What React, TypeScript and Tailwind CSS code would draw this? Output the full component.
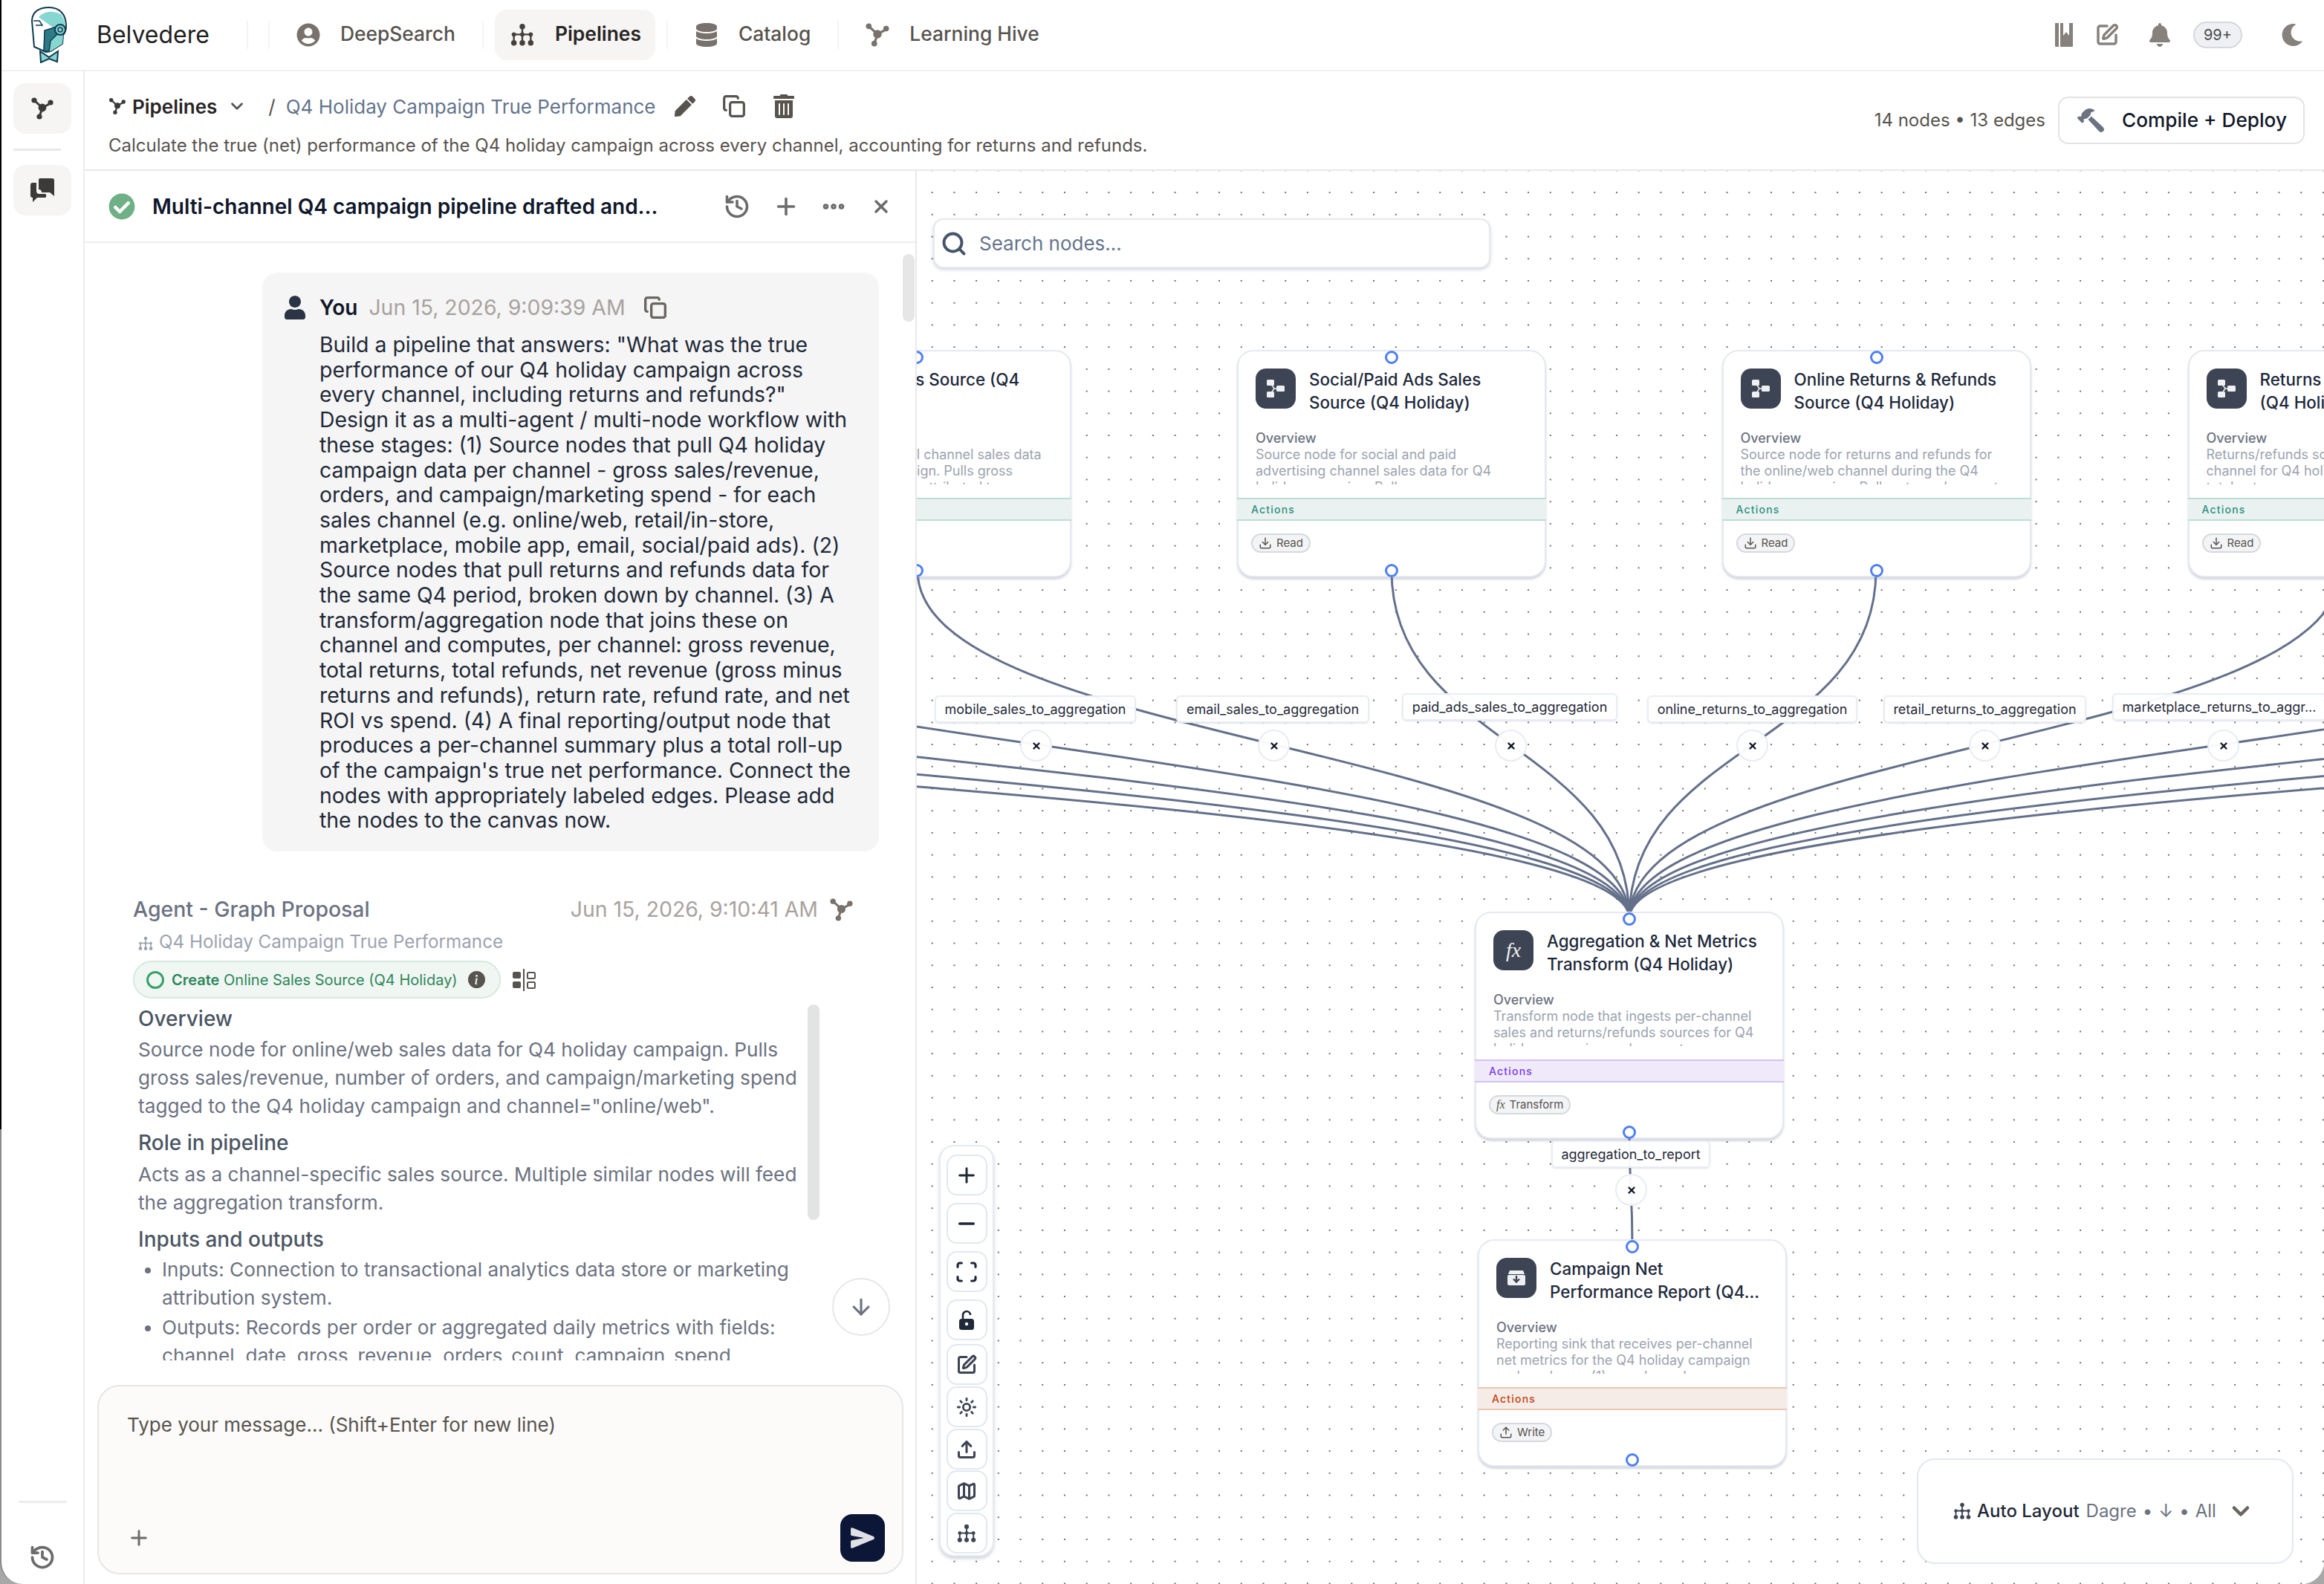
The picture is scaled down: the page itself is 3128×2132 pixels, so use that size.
import { ArrowDown, ChevronDown, Copy, Download, Ellipsis, History, Map as MapIcon, Minus, Plus, Scan, Search, SquarePen, Sun, Upload, X } from 'lucide-react';
import { BsInfoCircleFill } from 'react-icons/bs';
import { FaBell, FaCheckCircle, FaDatabase, FaHammer, FaMoon, FaPen, FaTrashAlt, FaUser, FaUserCircle } from 'react-icons/fa';
import { IoSend } from 'react-icons/io5';

// canvas origin in page coordinates
const OX = 1234;
const OY = 230;

function GraphIcon({ className }: { className?: string }) {
  return (
    <svg viewBox="0 0 32 32" className={className} fill="currentColor" stroke="currentColor">
      <path d="M5 5 L16 15 L27 9 M16 15 L12 27" strokeWidth="3" fill="none" />
      <circle cx="5" cy="5" r="3.6" stroke="none" />
      <circle cx="27" cy="8" r="3.6" stroke="none" />
      <circle cx="12" cy="27" r="3.6" stroke="none" />
      <circle cx="16" cy="15" r="5.4" stroke="none" />
    </svg>
  );
}

function TreeIcon({ className }: { className?: string }) {
  return (
    <svg viewBox="0 0 24 24" className={className} fill="currentColor" stroke="currentColor">
      <path d="M12 4 V20 M3.5 11.5 H20.5 M3.5 11.5 V20 M20.5 11.5 V20" strokeWidth="1.8" fill="none" />
      <circle cx="12" cy="3.6" r="2.8" stroke="none" />
      <circle cx="3.5" cy="11.5" r="2.2" stroke="none" />
      <circle cx="12" cy="11.5" r="2.2" stroke="none" />
      <circle cx="20.5" cy="11.5" r="2.2" stroke="none" />
      <circle cx="3.5" cy="20" r="2.8" stroke="none" />
      <circle cx="12" cy="20" r="2.8" stroke="none" />
      <circle cx="20.5" cy="20" r="2.8" stroke="none" />
    </svg>
  );
}

function ChatIcon({ className }: { className?: string }) {
  return (
    <svg viewBox="0 0 32 32" className={className} fill="currentColor">
      <path d="M11 2 a2 2 0 0 1 2 -2 H29 a3 3 0 0 1 3 3 V24 L26 19 H15 a4 4 0 0 0 -4 -4 Z" />
      <path d="M0 9 a3 3 0 0 1 3 -3 H8 V17 a4 4 0 0 0 4 4 H20 a3 3 0 0 1 0 5 H9 L3 32 V26 a3 3 0 0 1 -3 -3 Z" />
    </svg>
  );
}

function BookmarksIcon({ className }: { className?: string }) {
  return (
    <svg viewBox="0 0 24 32" className={className} fill="currentColor">
      <path d="M1 0 H5 V32 H1 a1 1 0 0 1 -1 -1 V1 a1 1 0 0 1 1 -1 Z" />
      <path d="M7 0 H11 V17 L15 12 L19 17 V0 H24 V31 a1 1 0 0 1 -1 1 H7 Z" />
    </svg>
  );
}

function SplitIcon({ className }: { className?: string }) {
  return (
    <svg viewBox="0 0 32 30" className={className} fill="none" stroke="currentColor">
      <rect x="0" y="4" width="11" height="9" rx="2" fill="currentColor" stroke="none" />
      <rect x="0" y="17" width="11" height="9" rx="2" fill="currentColor" stroke="none" />
      <path d="M15 0 V30" strokeWidth="2" />
      <rect x="20" y="5" width="10" height="8" rx="1.5" strokeWidth="2" />
      <rect x="20" y="18" width="10" height="8" rx="1.5" strokeWidth="2" />
    </svg>
  );
}

function OpenLockIcon({ className }: { className?: string }) {
  return (
    <svg viewBox="0 0 24 28" className={className}>
      <path d="M7 13 V7 a5 5 0 0 1 10 0" fill="none" stroke="currentColor" strokeWidth="2.6" />
      <rect x="2" y="12" width="20" height="15" rx="3.5" fill="currentColor" />
      <circle cx="12" cy="19" r="2.2" fill="#fff" />
    </svg>
  );
}

function SourceIcon() {
  return (
    <svg viewBox="0 0 24 24" className="w-6 h-6" fill="#eef0f3" stroke="#eef0f3">
      <rect x="0" y="0" width="10" height="8" rx="1.5" stroke="none" />
      <rect x="0" y="16" width="10" height="8" rx="1.5" stroke="none" />
      <rect x="13" y="8" width="11" height="8" rx="1.5" stroke="none" />
      <path d="M6 6 L10 12 L6 18 M10 12 H14" strokeWidth="1.5" fill="none" />
    </svg>
  );
}

function SinkIcon() {
  return (
    <svg viewBox="0 0 24 24" className="w-6 h-6">
      <path d="M3 2 H21 L23 7 H1 Z" fill="#eef0f3" />
      <rect x="0" y="8" width="24" height="14" rx="2" fill="#eef0f3" />
      <path d="M12 9 V17 M8 13.5 L12 17.5 L16 13.5" stroke="#3d4453" strokeWidth="2.4" fill="none" />
    </svg>
  );
}

function Logo() {
  return (
    <svg viewBox="0 0 48 76" className="w-12 h-[76px]">
      <path d="M20 61 L4 54 L1 19 C1 6 12 1 24 1 C38 1 47 10 47 26 C47 32 45 36 43 38 L42 50 L26 60 Z" fill="#fff" stroke="#103a4f" strokeWidth="2" />
      <path d="M10 14 C18 5 30 5 40 10 C46 18 47 28 44 36 L30 30 L18 32 L16 58 L20 60 L26 60 L42 50 L43 38" fill="#86d6d2" stroke="none" />
      <path d="M17 60 L18 32 L34 27 L34 38 L26 46 L24 60 Z" fill="#2e7a85" stroke="#103a4f" strokeWidth="1.5" />
      <circle cx="39" cy="31" r="7" fill="#86d6d2" stroke="#103a4f" strokeWidth="2" />
      <circle cx="39" cy="31" r="3" fill="none" stroke="#103a4f" strokeWidth="1.5" />
      <path d="M3 19 H11 L15 25 L6 25" fill="none" stroke="#103a4f" strokeWidth="1.5" />
      <path d="M12 60 L24 68 L36 60 L35 74 L24 70 L13 75 Z" fill="#86d6d2" stroke="#103a4f" strokeWidth="2" />
    </svg>
  );
}

function Sep({ className }: { className: string }) {
  return <div className={`w-[2px] h-[38px] bg-[#f4f4f4] ${className}`} />;
}

const sourceBand = { band: 'bg-[#e9f2f0] border-[#bcdcd5]', text: 'text-[#2f8f7f]' };
const transformBand = { band: 'bg-[#efe9fa] border-[#d3c0f6]', text: 'text-[#7c3aed]' };
const sinkBand = { band: 'bg-[#f6ece7] border-[#efc4b0]', text: 'text-[#c2410c]' };

const nodes = [
  { x: 1026, y: 471, title: ['Email Sales Source (Q4', 'Holiday)'], desc: ['Source node for email channel sales data', 'for Q4 holiday campaign. Pulls gross', 'sales/revenue, orders attributed to'], icon: <SourceIcon />, color: sourceBand, chip: 'Read' },
  { x: 1665, y: 471, title: ['Social/Paid Ads Sales', 'Source (Q4 Holiday)'], desc: ['Source node for social and paid', 'advertising channel sales data for Q4', 'holiday campaign. Pulls gross'], icon: <SourceIcon />, color: sourceBand, chip: 'Read' },
  { x: 2317.5, y: 471, title: ['Online Returns & Refunds', 'Source (Q4 Holiday)'], desc: ['Source node for returns and refunds for', 'the online/web channel during the Q4', 'holiday campaign. Pulls returned amounts'], icon: <SourceIcon />, color: sourceBand, chip: 'Read' },
  { x: 2944.5, y: 471, title: ['Returns & Refunds Source', '(Q4 Holiday)'], desc: ['Returns/refunds source for retail', 'channel for Q4 holiday campaign. Pulls', 'total_returns, amounts and counts'], icon: <SourceIcon />, color: sourceBand, chip: 'Read' },
  { x: 1985, y: 1227, title: ['Aggregation & Net Metrics', 'Transform (Q4 Holiday)'], desc: ['Transform node that ingests per-channel', 'sales and returns/refunds sources for Q4', 'holiday campaign and computes per'], icon: <span className="font-['Liberation_Serif',serif] italic text-[28px] text-[#eef0f3]">fx</span>, color: transformBand, chip: 'Transform' },
  { x: 1989, y: 1668, title: ['Campaign Net', 'Performance Report (Q4...'], desc: ['Reporting sink that receives per-channel', 'net metrics for the Q4 holiday campaign', 'and produces: (1) per-channel summary'], icon: <SinkIcon />, color: sinkBand, chip: 'Write' },
];

const edgeStarts = [-1323, -683, -43, 597, 1235, 1873, 2525, 3149, 3790, 4430, 5070, 5710];

const edgeLabels = [
  { name: 'mobile_sales_to_aggregation', x: 1258, y: 936, w: 271, bx: 1394, by: 1003 },
  { name: 'email_sales_to_aggregation', x: 1583, y: 936, w: 260, bx: 1714, by: 1003 },
  { name: 'paid_ads_sales_to_aggregation', x: 1887, y: 933, w: 290, bx: 2033, by: 1003 },
  { name: 'online_returns_to_aggregation', x: 2217, y: 936, w: 283, bx: 2358, by: 1003 },
  { name: 'retail_returns_to_aggregation', x: 2535, y: 936, w: 273, bx: 2671, by: 1003 },
  { name: 'marketplace_returns_to_aggr...', x: 2843, y: 933, w: 288, bx: 2992, by: 1003 },
  { name: 'aggregation_to_report', x: 2088, y: 1535, w: 214, bx: 2195, by: 1601 },
];

const zoomButtons = [
  { icon: <Plus className="w-8 h-8" strokeWidth={2.2} />, cls: '' },
  { icon: <Minus className="w-8 h-8" strokeWidth={2.6} />, cls: 'mt-[10px]' },
  { icon: <Scan className="w-8 h-8" strokeWidth={2.4} />, cls: 'mt-[10px]' },
  { icon: <OpenLockIcon className="w-[24px] h-[28px]" />, cls: 'mt-[10px]' },
  { icon: <SquarePen className="w-[28px] h-[28px] text-[#3d4453]" strokeWidth={2.6} />, cls: 'mt-[5px]' },
  { icon: <Sun className="w-[28px] h-[28px] text-[#3d4453]" strokeWidth={2.4} />, cls: 'mt-[2px]' },
  { icon: <Upload className="w-[28px] h-[28px] text-[#3d4453]" strokeWidth={2.6} />, cls: 'mt-[2px]' },
  { icon: <MapIcon className="w-[28px] h-[28px] text-[#3d4453]" strokeWidth={2.6} />, cls: 'mt-[1px]' },
  { icon: <TreeIcon className="w-[26px] h-[26px] text-[#3d4453]" />, cls: 'mt-[2px]' },
];

const userLines = `Build a pipeline that answers: "What was the true performance of our Q4 holiday campaign across every channel, including returns and refunds?" Design it as a multi-agent / multi-node workflow with these stages: (1) Source nodes that pull Q4 holiday campaign data per channel - gross sales/revenue, orders, and campaign/marketing spend - for each sales channel (e.g. online/web, retail/in-store, marketplace, mobile app, email, social/paid ads). (2) Source nodes that pull returns and refunds data for the same Q4 period, broken down by channel. (3) A transform/aggregation node that joins these on channel and computes, per channel: gross revenue, total returns, total refunds, net revenue (gross minus returns and refunds), return rate, refund rate, and net ROI vs spend. (4) A final reporting/output node that produces a per-channel summary plus a total roll-up of the campaign's true net performance. Connect the nodes with appropriately labeled edges. Please add the nodes to the canvas now.`;

function FlowNode({ n }: { n: (typeof nodes)[number] }) {
  return (
    <div
      className="absolute w-[416px] h-[306px] bg-white rounded-[22px] border-2 border-[#e4e8f0] shadow-[0_3px_3px_rgba(100,116,139,0.28)] flex flex-col"
      style={{ left: n.x - OX, top: n.y - OY }}
    >
      <div className="absolute top-[-1px] left-1/2 -translate-x-1/2 w-[18px] h-[18px] rounded-full bg-white border-[3px] border-[#4f7ff5]" />
      <div className="absolute bottom-[-2px] left-1/2 -translate-x-1/2 w-[18px] h-[18px] rounded-full bg-white border-[3px] border-[#4f7ff5]" />
      <div className="flex gap-[18px] pt-[23px] px-[23px]">
        <div className="w-[54px] h-[54px] shrink-0 rounded-[14px] bg-[#3d4453] flex items-center justify-center">{n.icon}</div>
        <div className="text-[22.4px] leading-[30.5px] font-medium text-[#1e293b] whitespace-nowrap">
          {n.title.map((t) => (
            <div key={t}>{t}</div>
          ))}
        </div>
      </div>
      <div className="mt-[22px] mx-[23px] h-[73px] overflow-hidden text-[18px] leading-[22px] whitespace-nowrap">
        <div className="font-medium text-[#6b7280]">Overview</div>
        {n.desc.map((d) => (
          <div key={d} className="text-[#9ca3af]">{d}</div>
        ))}
      </div>
      <div className={`mt-[18px] h-[31px] -mx-[2px] border-y-2 flex items-center px-[19px] ${n.color.band}`}>
        <span className={`text-[14px] font-medium tracking-[1.2px] ${n.color.text}`}>Actions</span>
      </div>
      <div className="mt-[17px] ml-[17px] self-start h-[26px] rounded-full border-2 border-[#d5d8de] bg-[#f3f4f6] flex items-center gap-[6px] px-[8px] text-[15px] text-[#57534e]">
        {n.chip === 'Read' && <Download className="w-[18px] h-[18px]" />}
        {n.chip === 'Write' && <Upload className="w-[18px] h-[18px]" />}
        {n.chip === 'Transform' && <span className="font-['Liberation_Serif',serif] italic text-[16px]">fx</span>}
        {n.chip}
      </div>
    </div>
  );
}

export default function App() {
  return (
    <div className="relative w-[3128px] h-[2132px] overflow-hidden bg-[#a8a8a8] font-[Inter,sans-serif]">
      <div className="absolute inset-0 rounded-b-[30px] overflow-hidden bg-white border-l-2 border-[#8a8a8a] flex flex-col">
        {/* TOP NAV */}
        <header className="h-[96px] shrink-0 border-b-2 border-[#f0f0f0] flex items-center pl-[40px]">
          <Logo />
          <span className="ml-[40px] text-[32px] text-[#1f1f1f]">Belvedere</span>
          <Sep className="ml-[50px]" />
          <Sep className="ml-[27px]" />
          <FaUserCircle className="ml-[36px] w-8 h-8 text-[#78716c]" />
          <span className="ml-[27px] pb-[2px] text-[26.4px] font-medium text-[#57534e]">DeepSearch</span>
          <Sep className="ml-[36px]" />
          <div className="ml-[15px] h-[68px] w-[216px] rounded-[16px] bg-[#f6f5f4] flex items-center pl-[21px] gap-[28px]">
            <TreeIcon className="w-8 h-8 text-[#44403c]" />
            <span className="pb-[2px] text-[26.4px] font-semibold text-[#292524]">Pipelines</span>
          </div>
          <Sep className="ml-[15px]" />
          <FaDatabase className="ml-[38px] w-[28px] h-8 text-[#78716c]" />
          <span className="ml-[29px] pb-[2px] text-[26.4px] font-medium text-[#57534e]">Catalog</span>
          <Sep className="ml-[36px]" />
          <GraphIcon className="ml-[35px] w-[34px] h-[34px] text-[#78716c]" />
          <span className="ml-[26px] pb-[2px] text-[26.4px] font-medium text-[#57534e]">Learning Hive</span>
          <div className="ml-auto flex items-center pr-[28px] text-[#86817c]">
            <BookmarksIcon className="w-6 h-8" />
            <SquarePen className="ml-[30px] w-8 h-8" strokeWidth={2.6} />
            <FaBell className="ml-[40px] w-[30px] h-[32px]" />
            <div className="ml-[30px] w-[66px] h-[36px] rounded-full bg-[#eef0f3] border-2 border-[#d5d8de] flex items-center justify-center text-[20px] text-[#4b4b4b]">99+</div>
            <FaMoon className="ml-[52px] w-[30px] h-[30px]" />
          </div>
        </header>

        <div className="flex flex-1 min-h-0">
          {/* LEFT RAIL */}
          <aside className="w-[112px] shrink-0 border-r-2 border-[#ececec] flex flex-col pl-[16px] pt-[16px] pb-[18px]">
            <div className="w-[78px] h-[68px] rounded-[16px] bg-[#f6f5f4] flex items-center justify-center">
              <GraphIcon className="w-8 h-8 text-[#3b3a39]" />
            </div>
            <div className="mt-[20px] w-[64px] h-[3px] bg-[#e8e8e8]" />
            <div className="mt-[19px] w-[78px] h-[68px] rounded-[16px] bg-[#f6f5f4] flex items-center justify-center">
              <ChatIcon className="w-8 h-8 text-[#3b3a39]" />
            </div>
            <div className="mt-auto w-[65px] ml-[7px] h-[3px] bg-[#ececec]" />
            <History className="mt-[55px] ml-[21px] w-9 h-9 text-[#6b6b6b]" strokeWidth={2.5} />
          </aside>

          <div className="flex-1 min-w-0 flex flex-col">
            {/* PIPELINE HEADER */}
            <div className="h-[134px] shrink-0 border-b-2 border-[#e8e8e8] flex items-center pl-[32px] pr-[26px]">
              <div className="flex flex-col gap-[21px] pt-[13px]">
                <div className="flex items-center h-[34px]">
                  <GraphIcon className="w-[24px] h-[24px] text-[#3b3a39]" />
                  <span className="ml-[8px] text-[26px] font-semibold text-[#292524]">Pipelines</span>
                  <ChevronDown className="ml-[14px] w-[26px] h-[26px] text-[#57534e]" strokeWidth={2.5} />
                  <span className="ml-[29px] text-[26px] text-[#57534e]">/</span>
                  <span className="ml-[14px] text-[26px] text-[#64748b]">Q4 Holiday Campaign True Performance</span>
                  <FaPen className="ml-[25px] w-[28px] h-[28px] text-[#57534e]" />
                  <Copy className="ml-[36px] w-8 h-8 text-[#57534e]" strokeWidth={2.4} />
                  <FaTrashAlt className="ml-[37px] w-[28px] h-8 text-[#57534e]" />
                </div>
                <p className="text-[24px] leading-[30px] text-[#57534e]">Calculate the true (net) performance of the Q4 holiday campaign across every channel, accounting for returns and refunds.</p>
              </div>
              <span className="ml-auto text-[24px] text-[#57534e]">14 nodes • 13 edges</span>
              <div className="ml-[17px] w-[332px] h-[64px] rounded-[14px] border-2 border-[#e3e3e3] flex items-center pl-[24px]">
                <FaHammer className="w-[36px] h-[36px] text-[#6b7280] -scale-x-100" />
                <span className="ml-[24px] text-[26.2px] font-medium text-[#111827]">Compile + Deploy</span>
              </div>
            </div>

            <div className="flex flex-1 min-h-0">
              {/* CHAT PANEL */}
              <section className="w-[1120px] shrink-0 border-r-2 border-[#e8e8e8] flex flex-col">
                <div className="h-[97px] shrink-0 border-b-2 border-[#eeeeee] flex items-center pl-[32px]">
                  <FaCheckCircle className="w-[36px] h-[36px] text-[#6fb086]" />
                  <span className="ml-[23px] w-[684px] text-[28px] font-semibold text-[#0f172a] whitespace-nowrap">Multi-channel Q4 campaign pipeline drafted and...</span>
                  <History className="ml-[85px] w-9 h-9 text-[#6b6b6b]" strokeWidth={2.4} />
                  <Plus className="ml-[30px] w-9 h-9 text-[#6b6b6b]" strokeWidth={2.4} />
                  <Ellipsis className="ml-[28px] w-9 h-9 text-[#6b6b6b]" strokeWidth={3} />
                  <X className="ml-[32px] w-7 h-7 text-[#6b6b6b]" strokeWidth={3} />
                </div>

                <div className="relative flex-1 min-h-0 overflow-hidden">
                  <div className="absolute right-[1px] top-[15px] w-[16px] h-[91px] rounded-full bg-[#e6e6e6]" />

                  {/* user message */}
                  <div className="ml-[239px] mt-[40px] w-[830px] h-[779px] rounded-[20px] bg-[#f5f5f5] pl-[28px] pr-[35px] pt-[30px]">
                    <div className="flex items-center h-[34px]">
                      <FaUser className="w-[32px] h-[32px] text-[#2b3445]" />
                      <span className="ml-[17px] text-[28px] font-semibold text-[#111827]">You</span>
                      <span className="ml-[15px] text-[28.4px] text-[#a8a29e] whitespace-nowrap">Jun 15, 2026, 9:09:39 AM</span>
                      <Copy className="ml-[24px] w-8 h-8 text-[#6b6560]" strokeWidth={2.5} />
                    </div>
                    <p className="ml-[49px] mt-[16px] text-[28.4px] leading-[33.7px] text-[#1f2937]">{userLines}</p>
                  </div>

                  {/* agent message */}
                  <div className="ml-[65px] mt-[60px] w-[970px] flex items-center h-[36px]">
                    <span className="text-[28.4px] font-medium text-[#6b7280]">Agent - Graph Proposal</span>
                    <span className="ml-auto text-[28.4px] text-[#a8a29e]">Jun 15, 2026, 9:10:41 AM</span>
                    <GraphIcon className="ml-[15px] w-[33px] h-[33px] text-[#78716c]" />
                  </div>
                  <div className="ml-[72px] mt-[10px] flex items-center h-[32px]">
                    <TreeIcon className="w-[20px] h-[20px] mt-[4px] text-[#9ca3af]" />
                    <span className="ml-[8px] text-[24.2px] text-[#9ca3af]">Q4 Holiday Campaign True Performance</span>
                  </div>
                  <div className="ml-[65px] mt-[9px] flex items-center">
                    <div className="w-[495px] h-[51px] rounded-full bg-[#f0f7f3] border-2 border-[#d5eade] flex items-center pl-[16px]">
                      <div className="w-[24px] h-[24px] rounded-full border-[3px] border-[#38a169]" />
                      <span className="ml-[10px] text-[20px] text-[#2f855a] whitespace-nowrap">
                        <span className="font-semibold">Create</span> Online Sales Source (Q4 Holiday)
                      </span>
                      <BsInfoCircleFill className="ml-[14px] w-[23px] h-[23px] text-[#57534e]" />
                    </div>
                    <SplitIcon className="ml-[16px] w-[32px] h-[30px] text-[#57534e]" />
                  </div>

                  <div className="relative ml-[72px] mt-[8px] w-[917px] h-[479px] overflow-hidden">
                    <div className="absolute right-0 top-0 w-[16px] h-[290px] rounded-full bg-[#e2e3e3]" />
                    <h4 className="mt-[2px] text-[28px] leading-[34px] font-medium text-[#4b5563]">Overview</h4>
                    <p className="mt-[6px] w-[900px] text-[26.2px] leading-[38px] text-[#6b7280]">
                      Source node for online/web sales data for Q4 holiday campaign. Pulls gross sales/revenue, number of orders, and campaign/marketing spend tagged to the Q4 holiday campaign and channel="online/web".
                    </p>
                    <h4 className="mt-[13px] text-[28px] leading-[34px] font-medium text-[#4b5563]">Role in pipeline</h4>
                    <p className="mt-[7px] w-[900px] text-[26.2px] leading-[38px] text-[#6b7280]">
                      Acts as a channel-specific sales source. Multiple similar nodes will feed the aggregation transform.
                    </p>
                    <h4 className="mt-[13px] text-[28px] leading-[34px] font-medium text-[#4b5563]">Inputs and outputs</h4>
                    <ul className="mt-[5px] w-[890px] list-disc pl-[32px] text-[26.2px] leading-[38px] text-[#6b7280]">
                      <li>Inputs: Connection to transactional analytics data store or marketing attribution system.</li>
                      <li className="mt-[2px]">Outputs: Records per order or aggregated daily metrics with fields: channel, date, gross_revenue, orders_count, campaign_spend,</li>
                    </ul>
                  </div>

                  <div className="absolute left-[1006px] top-[1393px] w-[78px] h-[78px] rounded-full bg-white border-2 border-[#e5e7eb] flex items-center justify-center">
                    <ArrowDown className="w-[34px] h-[34px] text-[#6b7280]" strokeWidth={2.2} />
                  </div>
                </div>

                {/* composer */}
                <div className="h-[268px] shrink-0 pl-[17px] pr-[16px] pb-[13px]">
                  <div className="h-full rounded-[30px] border-2 border-[#e6e6e6] bg-[#fcfbfa] flex flex-col justify-between pl-[38px] pr-[23px] pt-[35px] pb-[15px]">
                    <div className="text-[26px] leading-[34px] text-[#57534e]">Type your message... (Shift+Enter for new line)</div>
                    <div className="flex items-center justify-between">
                      <Plus className="w-8 h-8 text-[#6b6b6b]" strokeWidth={2.2} />
                      <div className="w-[60px] h-[64px] rounded-[16px] bg-[#0c1738] flex items-center justify-center">
                        <IoSend className="w-[34px] h-[34px] text-[#e0e1e6]" />
                      </div>
                    </div>
                  </div>
                </div>
              </section>

              {/* CANVAS */}
              <section className="relative flex-1 min-w-0 overflow-hidden bg-white bg-[radial-gradient(circle,#6f6f6f_1.1px,transparent_1.4px)] bg-size-[29.72px_29.72px] bg-position-[5.84px_14.25px]">
                <svg className="absolute inset-0 w-full h-full" fill="none" stroke="#64708a" strokeWidth="3">
                  {edgeStarts.map((sx) => (
                    <path key={sx} d={`M${sx - OX} ${768 - OY} C${sx - OX} ${1002 - OY} ${2193 - OX} ${1002 - OY} ${2193 - OX} ${1236 - OY}`} />
                  ))}
                  <path d={`M${2193 - OX} ${1523 - OY} C${2193 - OX} ${1600 - OY} ${2197 - OX} ${1600 - OY} ${2197 - OX} ${1677 - OY}`} />
                </svg>

                {nodes.map((n) => (
                  <FlowNode key={n.title[0]} n={n} />
                ))}

                {edgeLabels.map((l) => (
                  <div key={l.name}>
                    <div
                      className="absolute h-[37px] rounded-[6px] bg-white/95 border-2 border-[#e8ecf3] shadow-[0_1px_2px_rgba(100,116,139,0.2)] flex items-center justify-center text-[18px] text-[#1f2937] whitespace-nowrap"
                      style={{ left: l.x - OX, top: l.y - OY, width: l.w }}
                    >
                      {l.name}
                    </div>
                    <div
                      className="absolute w-[43px] h-[43px] rounded-full bg-white/95 border-2 border-[#e8ecf3] flex items-center justify-center"
                      style={{ left: l.bx - OX - 21, top: l.by - OY - 21 }}
                    >
                      <X className="w-[14px] h-[14px] text-[#111827]" strokeWidth={4} />
                    </div>
                  </div>
                ))}

                {/* search */}
                <div className="absolute left-[22px] top-[64px] w-[750px] h-[67px] rounded-[14px] bg-white border-2 border-[#e6e9ef] shadow-[0_2px_4px_rgba(100,116,139,0.3)] flex items-center pl-[8px]">
                  <Search className="w-[36px] h-[36px] text-[#475569]" strokeWidth={2.6} />
                  <span className="ml-[16px] text-[26px] text-[#64748b]">Search nodes...</span>
                </div>

                {/* zoom controls */}
                <div className="absolute left-[30px] top-[1311px] w-[74px] h-[554px] rounded-[20px] bg-white border-2 border-[#e6e9ef] shadow-[0_3px_4px_rgba(100,116,139,0.3)] flex flex-col items-center pt-[11px] text-[#1f2937]">
                  {zoomButtons.map((b, i) => (
                    <div key={i} className={`w-[55px] h-[55px] shrink-0 rounded-[14px] border-2 border-[#e2e8f0] flex items-center justify-center ${b.cls}`}>
                      {b.icon}
                    </div>
                  ))}
                </div>

                {/* auto layout */}
                <div className="absolute left-[1346px] top-[1733px] w-[507px] h-[142px] rounded-[24px] bg-white border-2 border-[#e2e8f0] flex items-center pl-[47px]">
                  <TreeIcon className="w-[24px] h-[24px] text-[#3d4453]" />
                  <span className="ml-[8px] text-[24px] font-medium text-[#1f2937]">Auto Layout</span>
                  <span className="ml-[9px] flex items-center gap-[8px] text-[24px] text-[#6b7280] whitespace-nowrap">
                    <span>Dagre</span>
                    <span>•</span>
                    <span>↓</span>
                    <span>•</span>
                    <span>All</span>
                  </span>
                  <ChevronDown className="ml-[15px] w-9 h-9 text-[#6b6560]" strokeWidth={3} />
                </div>
              </section>
            </div>
          </div>
        </div>
      </div>
      <div className="absolute left-0 top-0 w-[2px] h-[1520px] bg-black" />
    </div>
  );
}
